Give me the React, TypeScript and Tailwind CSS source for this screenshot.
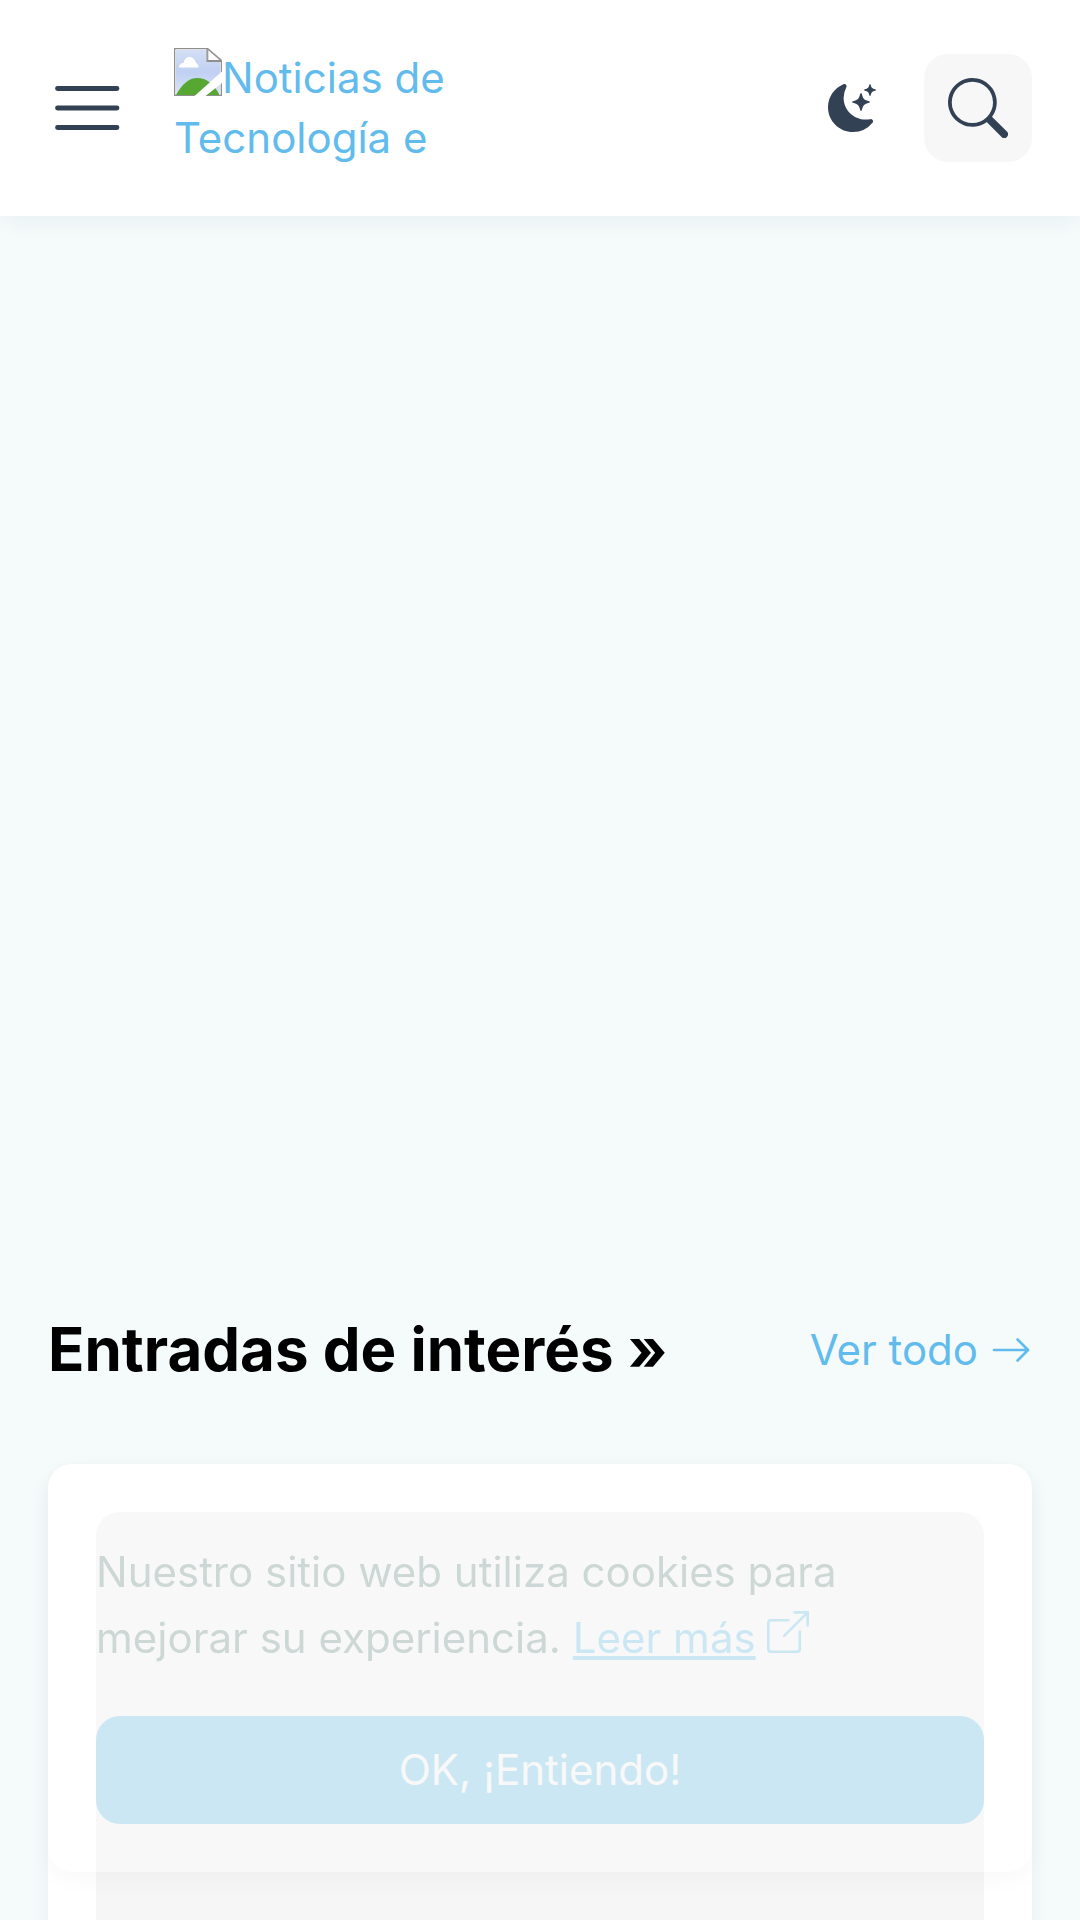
import React from "react";
import {
  BsArrowRight,
  BsBoxArrowUpRight,
  BsMoonStarsFill,
  BsSearch,
} from "react-icons/bs";

function MenuIcon() {
  return (
    <svg viewBox="0 0 72 60" className="h-[60px] w-[72px]" fill="none" stroke="#334155" strokeWidth="4.8" strokeLinecap="round">
      <path d="M9.500 10.500h59.500M9.500 30h59.500M9.500 49.500h59.500" />
    </svg>
  );
}

function BrokenImage() {
  return (
    <svg viewBox="0 0 48 48" className="h-12 w-12 shrink-0">
      <defs>
        <linearGradient id="sky" x1="0" y1="0" x2="0" y2="1">
          <stop offset="0" stopColor="#d3dff5" />
          <stop offset="0.5" stopColor="#c0d0f2" />
          <stop offset="1" stopColor="#dbe4f8" />
        </linearGradient>
        <clipPath id="frame">
          <path d="M1 1h32v12h14v34H1z" />
        </clipPath>
      </defs>
      <path d="M0 0h34l14 12v36H0z" fill="#8f8f8f" />
      <path d="M1.3 1.3h32v12h13.4v33.4H1.3z" fill="#fff" />
      <path d="M2 2h30.500v12H46v32H2z" fill="url(#sky)" />
      <path d="M34.3 2.2 45.5 12H34.3z" fill="#fff" />
      <path d="M33 1v12.3h14" stroke="#8f8f8f" strokeWidth="1.2" fill="none" />
      <path d="M5 19.500c0-3 2.400-4.700 4.600-4.600C10.500 10.500 13 9 15.500 9c3.300 0 5.700 2.500 6.200 5.700 1.800.5 2.800 2.300 2.800 4.800z" fill="#fff" />
      <g clipPath="url(#frame)">
        <path d="M2 47C8 36 15 30 23 30c10 0 17 6 22.500 17z" fill="#56a832" />
      </g>
      <path d="M20.500 48 48 23.500V35L31.500 48z" fill="#fff" />
    </svg>
  );
}

function Header() {
  return (
    <header className="relative z-10 flex h-[216px] shrink-0 items-center bg-white px-12 shadow-[0_6px_24px_-4px_rgba(30,41,59,0.07)]">
      <button aria-label="Menú">
        <MenuIcon />
      </button>
      <a className="ml-[54px] flex h-[120px] w-[300px] flex-col text-[42px] leading-[60px] text-[#62bbed]">
        <span className="flex h-[60px]">
          <BrokenImage />
          <span className="whitespace-nowrap">Noticias de</span>
        </span>
        <span className="whitespace-nowrap">Tecnología e</span>
      </a>
      <div className="ml-auto flex items-center gap-12 text-[#334155]">
        <button aria-label="Modo oscuro">
          <BsMoonStarsFill size={48} />
        </button>
        <button aria-label="Buscar" className="flex size-[108px] items-center justify-center rounded-3xl bg-[#f7f7f7]">
          <BsSearch size={60} />
        </button>
      </div>
    </header>
  );
}

function CookieNotice() {
  return (
    <div className="absolute inset-x-12 bottom-12 rounded-3xl bg-white px-12 pt-[75px] pb-12 opacity-30 shadow-[0_9px_30px_-4px_rgba(0,0,0,0.12)]">
      <p className="mb-[45px] text-[42px] leading-[66px] text-[#6e9289]">
        Nuestro sitio web utiliza cookies para
        <br />
        mejorar su experiencia.{" "}
        <a className="text-[#6ac7ee] underline">Leer más</a>
        <BsBoxArrowUpRight size={42} className="ml-[11.5px] inline-block align-baseline text-[#6ac7ee]" />
      </p>
      <button className="h-[108px] w-full rounded-3xl bg-[#6ac7ee] pb-0.5 text-[42px] text-white">
        OK, ¡Entiendo!
      </button>
    </div>
  );
}

export default function App() {
  return (
    <main className="relative flex h-[1920px] w-[1080px] flex-col overflow-hidden bg-[#f5fbfb] font-['Inter',sans-serif]">
      <Header />

      <section className="mt-[1089px] flex shrink-0 flex-col px-12">
        <div className="flex h-[90px] items-center justify-between">
          <h2 className="pb-0.5 text-[60px] leading-[88px] font-bold text-black">Entradas de interés »</h2>
          <a className="flex items-center gap-3 text-[42px] text-[#62bbed]">
            <span className="pb-0.5">Ver todo</span>
            <BsArrowRight size={42} />
          </a>
        </div>
        <article className="mt-[69px] h-[600px] shrink-0 rounded-3xl bg-white p-12 shadow-[0_6px_24px_-4px_rgba(30,41,59,0.07)]">
          <div className="h-full rounded-3xl bg-[#f6f6f6]" />
        </article>
      </section>

      <CookieNotice />
    </main>
  );
}
